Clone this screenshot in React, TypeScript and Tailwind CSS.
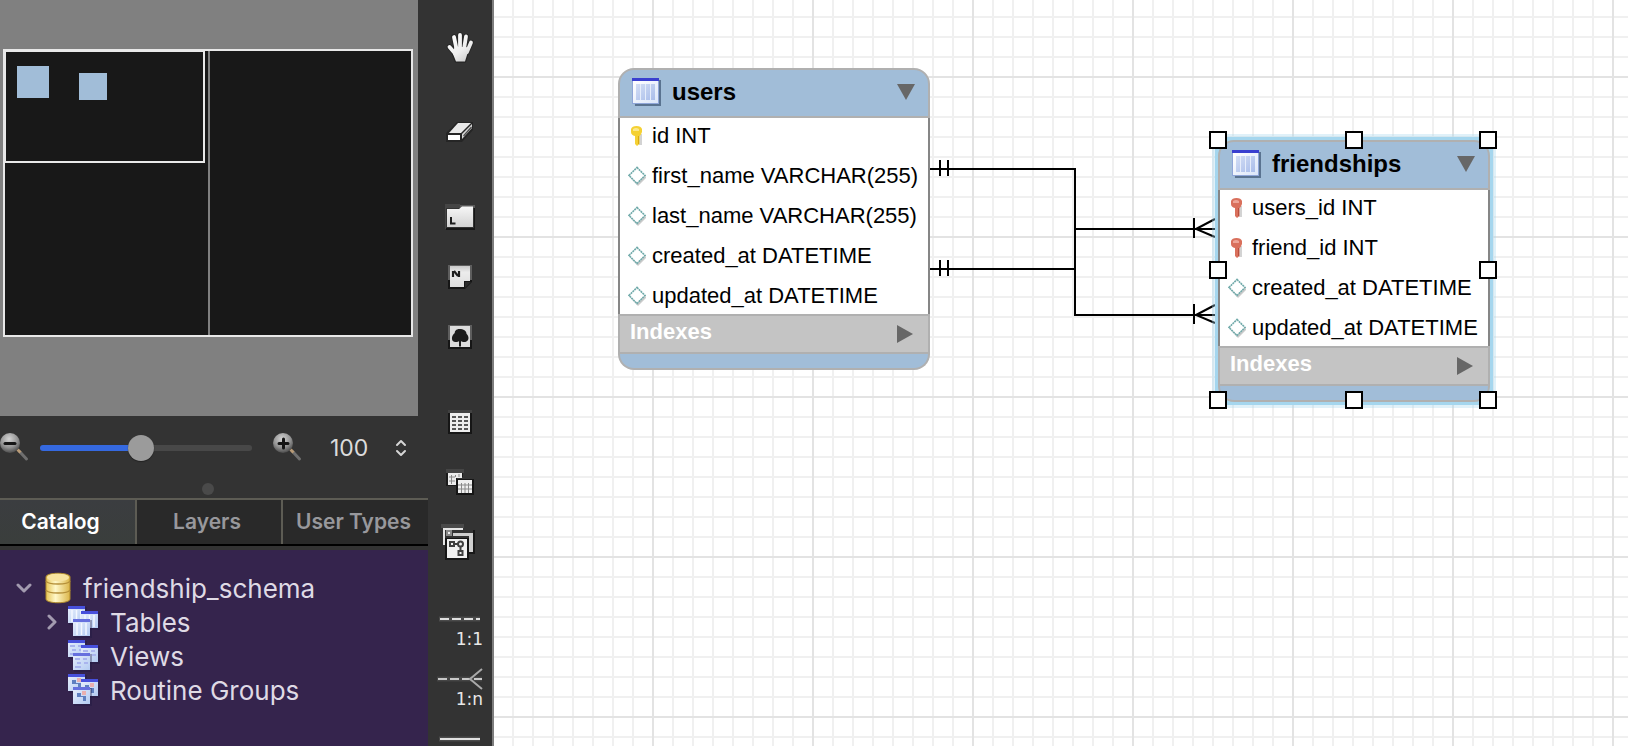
import React, { useState } from "react";

const uiFont = "font-[Inter,'Noto_Sans',sans-serif]";
const diagramFont = "font-['Liberation_Sans',Arial,sans-serif]";

/* ---------- Toolbar icons ---------- */

function HandIcon() {
  const fingers = "M9 7 L11.500 19 M15 5 V19 M21 6.500 L19 19 M26 12.500 L22 22 M4.500 17 L10.500 24";
  const palm = "M9.500 17 H21.500 L23.500 20 L20 31.500 H11 L8 24 Z";
  return (
    <svg width="30" height="34" viewBox="0 0 30 34" aria-hidden="true">
      <defs>
        <linearGradient id="hand" gradientUnits="userSpaceOnUse" x1="4" y1="4" x2="24" y2="32">
          <stop offset="0" stopColor="#ffffff" />
          <stop offset="0.600" stopColor="#eeeeee" />
          <stop offset="1" stopColor="#c8c8c8" />
        </linearGradient>
      </defs>
      <g stroke="#1d1d1d" strokeWidth="5.500" strokeLinecap="round" opacity="0.600">
        <path d={fingers} fill="none" />
        <path d={palm} fill="#1d1d1d" strokeWidth="2.500" strokeLinejoin="round" />
      </g>
      <path d={fingers} fill="none" stroke="url(#hand)" strokeWidth="3.800" strokeLinecap="round" />
      <path d={palm} fill="url(#hand)" />
    </svg>
  );
}

function EraserIcon() {
  return (
    <svg width="30" height="22" viewBox="0 0 30 22" aria-hidden="true">
      <path d="M1 12 L12 1 H28 V9 L17 21 H1 Z" fill="#1f1f1f" opacity="0.700" />
      <path d="M13 2 H26 L16 12 H4 Z" fill="#e9e9e9" />
      <path d="M3 14 H15 V19 H3 Z" fill="#ffffff" />
      <path d="M17 13 L27 3 V7 L17 18 Z" fill="#d6d6d6" />
      <path d="M18.500 15 L26.500 6" stroke="#4a4a4a" strokeWidth="1.200" />
    </svg>
  );
}

function LayerIcon() {
  return (
    <svg width="32" height="28" viewBox="0 0 32 28" aria-hidden="true">
      <defs>
        <linearGradient id="layer" x1="0" y1="0" x2="0" y2="1">
          <stop offset="0" stopColor="#f7f7f7" />
          <stop offset="1" stopColor="#d2d2d2" />
        </linearGradient>
      </defs>
      <path d="M1 1 H16 V5 H2 V26 H1 Z" fill="#454545" />
      <path d="M2 25 H30 V3 H31 V27 H2 Z" fill="#161616" />
      <path d="M16 2 H31 V5 H16 Z" fill="#5a5a5a" />
      <path d="M3 6 H15 L18 3.500 H29 V24 H3 Z" fill="url(#layer)" />
      <path d="M7 14 V20.500 H11.500" stroke="#1d1d1d" strokeWidth="2" fill="none" />
    </svg>
  );
}

function NoteIcon() {
  return (
    <svg width="26" height="26" viewBox="0 0 26 26" aria-hidden="true">
      <defs>
        <linearGradient id="note" x1="0" y1="0" x2="0" y2="1">
          <stop offset="0" stopColor="#c9c9c9" />
          <stop offset="0.300" stopColor="#ececec" />
          <stop offset="1" stopColor="#dedede" />
        </linearGradient>
      </defs>
      <path d="M1 1 H25 V18 L18 25 H1 Z" fill="#161616" />
      <path d="M1 1 H25 V16 H1 Z" fill="#5e5e5e" />
      <path d="M3 2 H23 V17 H17 V23 H3 Z" fill="url(#note)" />
      <path d="M18 24 V18 H24 Z" fill="#2b2b2b" />
      <path d="M6 13 V7 M7 7 L11 12 M12 13 V7" stroke="#1f1f1f" strokeWidth="2.200" fill="none" />
    </svg>
  );
}

function ImageIcon() {
  return (
    <svg width="26" height="26" viewBox="0 0 26 26" aria-hidden="true">
      <rect x="1" y="1" width="24" height="24" fill="#161616" />
      <path d="M1 1 H25 V16 H1 Z" fill="#5e5e5e" />
      <rect x="3" y="2" width="20" height="21" fill="#dcdcdc" />
      <path
        d="M12.500 5 C9 5 7.500 7.500 7.800 9 C4.500 11 3.500 17.500 8 18 C10 18.300 11.500 17.600 12 17 V22.500 H14 V17 C15 18 17 18.300 19 17.800 C22.500 16.500 22 12 19.500 9.800 C19.500 7 16.500 5 12.500 5 Z"
        fill="#1c1c1c"
      />
    </svg>
  );
}

function Cells({ x, y, w, cols, rows }: { x: number; y: number; w: number; cols: number; rows: number }) {
  return (
    <>
      {Array.from({ length: cols * rows }, (_, i) => (
        <rect key={i} x={x + (i % cols) * (w + 2)} y={y + Math.floor(i / cols) * 4} width={w} height="2" fill="#555555" />
      ))}
    </>
  );
}

function TableToolIcon() {
  return (
    <svg width="26" height="26" viewBox="0 0 26 26" aria-hidden="true">
      <rect x="1" y="2" width="24" height="23" fill="#161616" />
      <path d="M1 1 H25 V4 H1 Z" fill="#414141" />
      <rect x="3" y="4" width="20" height="19" fill="#ededed" />
      <Cells x={5} y={7} w={4} cols={3} rows={4} />
    </svg>
  );
}

function ViewToolIcon() {
  return (
    <svg width="30" height="28" viewBox="0 0 30 28" aria-hidden="true">
      <path d="M1 1 H19 V5 H1 Z" fill="#454545" />
      <path d="M1 5 H18 V9 H12 V18 H1 Z" fill="#1b1b1b" />
      <path d="M3 5 H17 V10 H11 V17 H3 Z" fill="#ececec" />
      <path d="M4 9 H10 M4 13 H10 M6.500 7 V16 M10.500 7 V9 M14 6 V9" stroke="#8a8a8a" strokeWidth="1" />
      <rect x="11" y="11" width="18" height="16" fill="#161616" />
      <rect x="13" y="12" width="14" height="13" fill="#f0f0f0" />
      <path d="M13 17 H27 M13 21 H27 M16.500 15 V25 M20 15 V25 M23.500 15 V25" stroke="#8a8a8a" strokeWidth="1" />
    </svg>
  );
}

function RoutineToolIcon() {
  return (
    <svg width="36" height="38" viewBox="0 0 36 38" className="mr-1" aria-hidden="true">
      <path d="M1 1 H24 V5 H1 Z" fill="#4a4a4a" />
      <path d="M3 22 V5 H23 V7 H5 V22 Z" fill="#e5e5e5" />
      <rect x="6" y="7" width="6" height="6" fill="#8a8a8a" />
      <rect x="8" y="9" width="2" height="2" fill="#eeeeee" />
      <path d="M13 10 H33 V29 H29 V13 H13 Z" fill="#cfcfcf" />
      <path d="M33 7 H35 V31 H29 V29 H33 Z" fill="#181818" />
      <rect x="5" y="15" width="24" height="22" fill="#161616" />
      <rect x="7" y="16" width="20" height="19" fill="#f0f0f0" />
      <g fill="none" stroke="#3f3f3f" strokeWidth="2">
        <rect x="10" y="19" width="4" height="4" />
        <circle cx="20.500" cy="21" r="2.500" />
        <rect x="18.500" y="28" width="4" height="4" />
        <path d="M14 21 H18 M20.500 24 V28" />
      </g>
    </svg>
  );
}

function RelationGlyph({ kind }: { kind: "dashed" | "crow" | "solid" }) {
  return (
    <svg width="46" height="24" viewBox="0 0 46 24" aria-hidden="true">
      {kind === "dashed" && (
        <>
          <path d="M2 12 H43" stroke="#4b4b4b" strokeWidth="5" />
          <path d="M3 12 H43" stroke="#e0e0e0" strokeWidth="2" strokeDasharray="9 3" />
        </>
      )}
      {kind === "crow" && (
        <>
          <path d="M0 12 H45" stroke="#454545" strokeWidth="5" />
          <path d="M1 12 H45" stroke="#c8c8c8" strokeWidth="2" strokeDasharray="9 3" />
          <path d="M45 2 L33 12 L45 22" stroke="#a9a9a9" strokeWidth="2" fill="none" />
        </>
      )}
      {kind === "solid" && (
        <>
          <path d="M2 12 H43" stroke="#4b4b4b" strokeWidth="5" />
          <path d="M3 12 H43" stroke="#e0e0e0" strokeWidth="2" />
        </>
      )}
    </svg>
  );
}

/* ---------- Small icons ---------- */

function MagnifierIcon({ sign }: { sign: "minus" | "plus" }) {
  const id = `lens-${sign}`;
  return (
    <svg width="30" height="30" viewBox="0 0 30 30" aria-hidden="true">
      <defs>
        <radialGradient id={id} cx="0.450" cy="0.300" r="0.700">
          <stop offset="0" stopColor="#d4d4d4" />
          <stop offset="0.600" stopColor="#949494" />
          <stop offset="1" stopColor="#4c4c4c" />
        </radialGradient>
      </defs>
      <path d="M20 19 L26.500 26" stroke="#6f6f6f" strokeWidth="3" strokeLinecap="round" />
      <path d="M17.500 16.500 L20.500 19.500" stroke="#b89a76" strokeWidth="3" />
      <circle cx="10" cy="10" r="10" fill={`url(#${id})`} />
      <path d={sign === "plus" ? "M6 10.500 H15 M10.500 6 V15" : "M5 10.500 H15"} stroke="#151515" strokeWidth="3" strokeLinecap="round" />
    </svg>
  );
}

function TableIcon() {
  return (
    <svg width="30" height="30" viewBox="0 0 30 30" className="shrink-0" aria-hidden="true">
      <defs>
        <linearGradient id="tbl" x1="0" y1="0" x2="1" y2="1">
          <stop offset="0" stopColor="#ffffff" />
          <stop offset="1" stopColor="#dbe6f9" />
        </linearGradient>
        <linearGradient id="col" x1="0" y1="0" x2="1" y2="1">
          <stop offset="0" stopColor="#d3def5" />
          <stop offset="1" stopColor="#a9bdea" />
        </linearGradient>
      </defs>
      <path d="M2 3 H29 V29 H3 Z" fill="#4d6684" opacity="0.850" />
      <rect x="0" y="1" width="27" height="26" fill="#8fa6d8" />
      <rect x="1" y="4" width="25" height="22" fill="url(#tbl)" />
      <rect x="0" y="1" width="27" height="3" fill="#3a40cf" />
      <rect x="4" y="7" width="19" height="16" fill="url(#col)" />
      <path d="M8.500 7 V23 M13.500 7 V23 M18.500 7 V23" stroke="#e6edfb" strokeWidth="1" />
    </svg>
  );
}

function KeyIcon({ tone }: { tone: "gold" | "red" }) {
  const gold = tone === "gold";
  return (
    <svg width="18" height="22" viewBox="0 0 18 22" className="shrink-0" aria-hidden="true">
      <path d="M10 9 H14 V20 H11 Z" fill="#a8a8a8" opacity="0.500" />
      <path
        d="M3 4 Q4 1 8.500 1 Q13 1 14 4 V7 Q13 10 11.500 11 V19 L9 21 L7 19 V11 Q3 10 3 7 Z"
        fill={gold ? "#f5d133" : "#d9705c"}
      />
      <path d="M5 4 Q8 2 11 4 V6 H5 Z" fill={gold ? "#fbe88c" : "#eda597"} />
      <path d="M10.500 11 V19" stroke={gold ? "#d9a916" : "#b94f3e"} strokeWidth="1" />
    </svg>
  );
}

function DiamondIcon() {
  return (
    <svg width="18" height="20" viewBox="0 0 18 20" className="shrink-0" aria-hidden="true">
      <path d="M10 3 L18.500 11.500 L10 20 L2 11.500 Z" fill="#b5b5b5" opacity="0.700" />
      <path d="M9 1.500 L17 9.500 L9 17.500 L1 9.500 Z" fill="#ffffff" stroke="#6fa9a9" strokeWidth="1.600" strokeDasharray="2 0.600" />
    </svg>
  );
}

function DatabaseIcon() {
  return (
    <svg width="26" height="32" viewBox="0 0 26 32" aria-hidden="true">
      <defs>
        <linearGradient id="db" x1="0" y1="0" x2="1" y2="0">
          <stop offset="0" stopColor="#e6c557" />
          <stop offset="0.400" stopColor="#fff8c9" />
          <stop offset="1" stopColor="#dbb548" />
        </linearGradient>
      </defs>
      <path d="M1 5 C1 0 25 0 25 5 V27 C25 32 1 32 1 27 Z" fill="url(#db)" stroke="#b08a2a" strokeWidth="1" />
      <ellipse cx="13" cy="5.500" rx="11" ry="3.800" fill="#f7e3a0" />
      <path d="M1 9 C3 13 23 13 25 9 M1 18 C3 22 23 22 25 18" fill="none" stroke="#b5903a" strokeWidth="1.500" />
    </svg>
  );
}

function StackIcon({ kind }: { kind: "tables" | "views" | "routines" }) {
  const sheets = [
    { x: 0, y: 0, bar: "#4750dc" },
    { x: 13, y: 5, bar: "#4750dc" },
    { x: 5, y: 13, bar: "#6670de" },
  ];
  return (
    <svg width="32" height="32" viewBox="0 0 32 32" aria-hidden="true">
      <defs>
        <linearGradient id={`sheet-${kind}`} x1="0" y1="0" x2="1" y2="1">
          <stop offset="0" stopColor="#e8effc" />
          <stop offset="1" stopColor="#b3cbf2" />
        </linearGradient>
      </defs>
      {sheets.map(({ x, y, bar }) => (
        <g key={x} transform={`translate(${x} ${y})`}>
          <rect x="1" y="1" width="18" height="18" fill="#1d1840" opacity="0.350" />
          <rect x="0" y="0" width="17" height="17" fill={`url(#sheet-${kind})`} />
          <rect x="0" y="0" width="17" height="3" fill={bar} />
          {kind === "tables" && <path d="M4 4 V16 M8.500 4 V16 M13 4 V16" stroke="#f4f8ff" strokeWidth="1.500" />}
          {kind === "views" && <path d="M2 6 H7 M10 6 H14 M4 10 H8 M11 10 H15 M2 14 H8" stroke="#a9b4ee" strokeWidth="2" />}
          {kind === "routines" && (
            <>
              <rect x="9" y="4" width="4" height="4" fill="#e9b0b0" />
              <path d="M4 6 H8 V9 H13 V14 H10 V10 H4 Z" fill="#5f7fc0" />
            </>
          )}
        </g>
      ))}
    </svg>
  );
}

/* ---------- Diagram entities ---------- */

type Column = { text: string; icon: "gold" | "red" | "diamond" };

function Entity({ name, columns, selected = false }: { name: string; columns: Column[]; selected?: boolean }) {
  return (
    <article
      className={
        selected
          ? "rounded-md bg-[#a5d6ee] shadow-[0_0_0_3px_#a5d6ee,0_0_0_6px_rgba(165,214,238,0.35)]"
          : "rounded-2xl"
      }
    >
      <header className="flex h-[50px] items-center gap-2.5 rounded-t-2xl border-2 border-[#b0b0b0] bg-[#a1bdd8] pr-[13px] pb-0.5 pl-3">
        <TableIcon />
        <h2 className="flex-1 text-2xl leading-6 font-bold">{name}</h2>
        <button type="button" aria-label={`Collapse ${name}`}>
          <svg width="18" height="16" viewBox="0 0 18 16" aria-hidden="true">
            <path d="M0 0 H18 L9 16 Z" fill="#676767" />
          </svg>
        </button>
      </header>
      <ul className="grid gap-1 border-x-2 border-[#868686] bg-white pl-2">
        {columns.map((column) => (
          <li key={column.text} className="flex h-9 items-center gap-1.5 text-[22px] whitespace-nowrap">
            {column.icon === "diamond" ? <DiamondIcon /> : <KeyIcon tone={column.icon} />}
            <span className="pb-0.5">{column.text}</span>
          </li>
        ))}
      </ul>
      <div className="flex h-10 items-center justify-between border-2 border-[#b0b0b0] bg-[#c4c4c4] pr-[15px] pl-2.5">
        <h3 className="pb-1 text-[22px] leading-6 font-bold text-white">Indexes</h3>
        <button type="button" aria-label={`Expand ${name} indexes`}>
          <svg width="16" height="18" viewBox="0 0 16 18" aria-hidden="true">
            <path d="M0 0 V18 L16 9 Z" fill="#676767" />
          </svg>
        </button>
      </div>
      <div className="h-4 rounded-b-2xl border-x-2 border-b-2 border-[#b0b0b0] bg-[#a1bdd8]" />
    </article>
  );
}

function Handle({ place }: { place: string }) {
  return <span className={`absolute size-[18px] border-2 border-black bg-white ${place}`} />;
}

function Diagram() {
  return (
    <main
      className={`relative min-w-0 flex-1 overflow-hidden bg-white bg-[linear-gradient(to_right,#e3e3e3_2px,transparent_2px),linear-gradient(to_bottom,#e3e3e3_2px,transparent_2px),linear-gradient(to_right,#f0f0f0_2px,transparent_2px),linear-gradient(to_bottom,#f0f0f0_2px,transparent_2px)] bg-[length:160px_160px,160px_160px,20px_20px,20px_20px] bg-[position:158px_76px,158px_76px,18px_16px,18px_16px] text-black ${diagramFont}`}
    >
      <svg className="absolute top-0 left-0" width="730" height="340" fill="none" stroke="#000000" strokeWidth="2" aria-hidden="true">
        <path d="M436 169 H581 V315 H721" />
        <path d="M436 269 H581 M581 229 H721" />
        <path d="M446 160 V176 M454 160 V176 M446 260 V276 M454 260 V276" />
        <path d="M700 218 V238 M700 304 V324" />
        <path d="M721 219 L702 229 L721 237 M721 305 L702 315 L721 323" />
      </svg>
      <div className="absolute top-[68px] left-[124px] w-[312px]">
        <Entity
          name="users"
          columns={[
            { text: "id INT", icon: "gold" },
            { text: "first_name VARCHAR(255)", icon: "diamond" },
            { text: "last_name VARCHAR(255)", icon: "diamond" },
            { text: "created_at DATETIME", icon: "diamond" },
            { text: "updated_at DATETIME", icon: "diamond" },
          ]}
        />
      </div>
      <div className="absolute top-[140px] left-[724px] w-[272px]">
        <Entity
          selected
          name="friendships"
          columns={[
            { text: "users_id INT", icon: "red" },
            { text: "friend_id INT", icon: "red" },
            { text: "created_at DATETIME", icon: "diamond" },
            { text: "updated_at DATETIME", icon: "diamond" },
          ]}
        />
        <Handle place="-top-[9px] -left-[9px]" />
        <Handle place="-top-[9px] left-[127px]" />
        <Handle place="-top-[9px] -right-[7px]" />
        <Handle place="top-[121px] -left-[9px]" />
        <Handle place="top-[121px] -right-[7px]" />
        <Handle place="-bottom-[7px] -left-[9px]" />
        <Handle place="-bottom-[7px] left-[127px]" />
        <Handle place="-bottom-[7px] -right-[7px]" />
      </div>
    </main>
  );
}

/* ---------- Toolbar ---------- */

function Tool({ label, children }: { label: string; children: React.ReactNode }) {
  return (
    <button type="button" aria-label={label} className="flex h-[60px] w-full shrink-0 items-center justify-center">
      {children}
    </button>
  );
}

function RelationTool({ kind, label, text }: { kind: "dashed" | "crow" | "solid"; label: string; text?: string }) {
  return (
    <button type="button" aria-label={label} className="flex h-[60px] w-full shrink-0 flex-col items-end pt-2.5 pr-[9px]">
      <RelationGlyph kind={kind} />
      <span className="text-[17px] leading-4 text-[#e8e8e8]">{text}</span>
    </button>
  );
}

function Toolbar() {
  return (
    <nav
      aria-label="Diagram tools"
      className="flex w-[66px] shrink-0 flex-col gap-[25px] overflow-hidden border-r-2 border-[#7d7d7d] bg-[#333333] pt-[17px] font-['DejaVu_Sans',sans-serif]"
    >
      <Tool label="Pan">
        <HandIcon />
      </Tool>
      <Tool label="Erase">
        <EraserIcon />
      </Tool>
      <div>
        <Tool label="Layer">
          <LayerIcon />
        </Tool>
        <Tool label="Note">
          <NoteIcon />
        </Tool>
        <Tool label="Image">
          <ImageIcon />
        </Tool>
      </div>
      <div>
        <Tool label="Table">
          <TableToolIcon />
        </Tool>
        <Tool label="View">
          <ViewToolIcon />
        </Tool>
        <Tool label="Routine group">
          <RoutineToolIcon />
        </Tool>
      </div>
      <div>
        <RelationTool kind="dashed" label="One to one, non-identifying" text="1:1" />
        <RelationTool kind="crow" label="One to many, non-identifying" text="1:n" />
        <RelationTool kind="solid" label="One to one, identifying" />
      </div>
    </nav>
  );
}

/* ---------- Sidebar ---------- */

function Navigator() {
  return (
    <section aria-label="Diagram navigator" className="mr-2.5 h-[416px] shrink-0 bg-[#808080] pt-[49px] pr-[5px] pl-[3px]">
      <div className="relative grid h-72 grid-cols-[205px_1fr] border-2 border-[#e8e8e8] bg-[#181818]">
        <div className="border-r-2 border-[#808080]" />
        <div className="absolute top-0 left-0 h-[112px] w-[200px] border-2 border-t-1 border-l-1 border-[#e8e8e8]">
          <span className="absolute top-[14px] left-[11px] size-8 bg-[#a1bdd8]" />
          <span className="absolute top-[21px] left-[73px] h-[27px] w-7 bg-[#a1bdd8]" />
        </div>
      </div>
    </section>
  );
}

function ZoomBar() {
  const [zoom, setZoom] = useState(100);
  const min = 10;
  const max = 200;
  const fill = ((zoom - min) / (max - min)) * 100;
  return (
    <div className="flex h-16 shrink-0 items-center">
      <button type="button" aria-label="Zoom out" onClick={() => setZoom(Math.max(min, zoom - 10))}>
        <MagnifierIcon sign="minus" />
      </button>
      <input
        type="range"
        aria-label="Zoom"
        min={min}
        max={max}
        value={zoom}
        onChange={(e) => setZoom(Number(e.target.value))}
        style={{ backgroundImage: `linear-gradient(to right, #3569e0 ${fill}%, #484848 ${fill}%)` }}
        className="ml-2.5 h-1.5 w-[212px] appearance-none rounded-full [&::-webkit-slider-thumb]:size-[26px] [&::-webkit-slider-thumb]:appearance-none [&::-webkit-slider-thumb]:rounded-full [&::-webkit-slider-thumb]:bg-[#9b9b9b] [&::-webkit-slider-thumb]:shadow-[0_1px_1px_#222222]"
      />
      <button type="button" aria-label="Zoom in" className="ml-[21px]" onClick={() => setZoom(Math.min(max, zoom + 10))}>
        <MagnifierIcon sign="plus" />
      </button>
      <input
        type="text"
        aria-label="Zoom percentage"
        value={zoom}
        onChange={(e) => setZoom(Number(e.target.value) || min)}
        className="ml-[27px] w-16 bg-transparent text-[23px] text-[#dcdcdc]"
      />
      <button type="button" aria-label="Step zoom" className="ml-px">
        <svg width="12" height="18" viewBox="0 0 12 18" fill="none" stroke="#d6d6d6" strokeWidth="2" strokeLinecap="round" strokeLinejoin="round" aria-hidden="true">
          <path d="M2 6 L6 2 L10 6 M2 12 L6 16 L10 12" />
        </svg>
      </button>
    </div>
  );
}

function Tabs() {
  return (
    <div role="tablist" className="flex h-12 shrink-0 border-y-2 border-t-[#5d5c54] border-b-black bg-[#292929] text-[21px] font-semibold text-[#98989c]">
      <button type="button" role="tab" aria-selected="true" className="w-[137px] border-r-2 border-[#5d5c54] bg-linear-to-b from-[#3b3d40] to-[#3a3e3c] pr-3.5 text-white">
        Catalog
      </button>
      <button type="button" role="tab" aria-selected="false" className="w-[146px] border-r-2 border-[#5d5c54] pr-1">
        Layers
      </button>
      <button type="button" role="tab" aria-selected="false" className="flex-1 pr-1 whitespace-nowrap">
        User Types
      </button>
    </div>
  );
}

function Tree() {
  const row = "flex h-[34px] items-center";
  return (
    <div className="mt-1 min-h-0 flex-1 overflow-hidden bg-[#35244d] pt-[21px] text-[26px] text-[#dfdae5]">
      <ul role="tree" aria-label="Catalog">
        <li role="treeitem" aria-expanded="true">
          <div className={`${row} pl-4`}>
            <svg width="16" height="10" viewBox="0 0 16 10" fill="none" stroke="#a39bb0" strokeWidth="3" strokeLinecap="round" strokeLinejoin="round" aria-hidden="true">
              <path d="M2 2 L8 8 L14 2" />
            </svg>
            <span className="ml-[13px] w-[38px]">
              <DatabaseIcon />
            </span>
            friendship_schema
          </div>
          <ul role="group">
            <li role="treeitem" aria-expanded="false" className={`${row} pl-[47px]`}>
              <svg width="10" height="16" viewBox="0 0 10 16" fill="none" stroke="#a39bb0" strokeWidth="3" strokeLinecap="round" strokeLinejoin="round" aria-hidden="true">
                <path d="M2 2 L8 8 L2 14" />
              </svg>
              <span className="ml-[11px] w-[42px]">
                <StackIcon kind="tables" />
              </span>
              Tables
            </li>
            <li role="treeitem" className={`${row} pl-[68px]`}>
              <span className="w-[42px]">
                <StackIcon kind="views" />
              </span>
              Views
            </li>
            <li role="treeitem" className={`${row} pl-[68px]`}>
              <span className="w-[42px]">
                <StackIcon kind="routines" />
              </span>
              Routine Groups
            </li>
          </ul>
        </li>
      </ul>
    </div>
  );
}

export default function App() {
  return (
    <div className={`flex h-screen overflow-hidden bg-[#333333] ${uiFont}`}>
      <aside className="flex w-[428px] shrink-0 flex-col">
        <Navigator />
        <ZoomBar />
        <div className="flex h-[18px] shrink-0 items-center justify-center pr-3">
          <span className="size-3 rounded-full bg-[#4a4a4a]" />
        </div>
        <Tabs />
        <Tree />
      </aside>
      <Toolbar />
      <Diagram />
    </div>
  );
}
